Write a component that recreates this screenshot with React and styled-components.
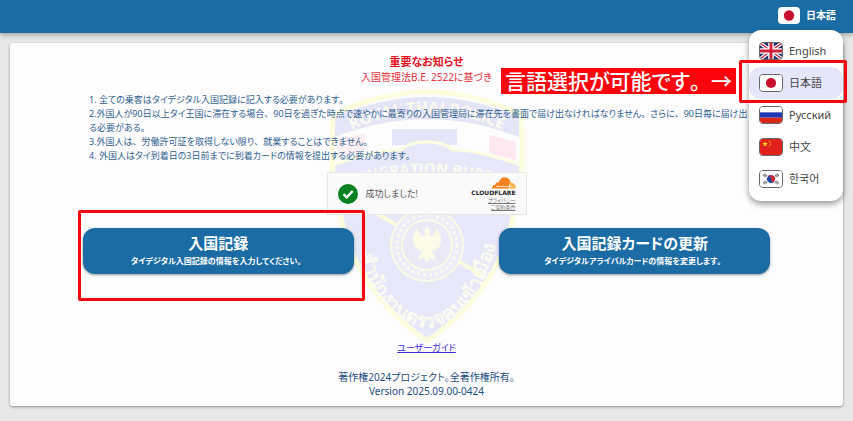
import React from 'react';
import styled, {createGlobalStyle} from 'styled-components';

const languages = [
    {code: 'en', label: 'English'},
    {code: 'ja', label: '日本語'},
    {code: 'ru', label: 'Русский'},
    {code: 'zh', label: '中文'},
    {code: 'ko', label: '한국어'},
]

const notices = [
    '1. 全ての乗客はタイデジタル入国記録に記入する必要があります。',
    '2.外国人が90日以上タイ王国に滞在する場合、90日を過ぎた時点で速やかに最寄りの入国管理局に滞在先を書面で届け出なければなりません。さらに、90日毎に届け出る必要がある。',
    '3.外国人は、労働許可証を取得しない限り、就業することはできません。',
    '4. 外国人はタイ到着日の3日前までに到着カードの情報を提出する必要があります。',
]

const flagArt = {
    en: (
        <>
            <rect width="24" height="18" fill="#1f2f6b"/>
            <path d="M0 0L24 18M24 0L0 18" stroke="#fff" strokeWidth="4"/>
            <path d="M0 0L24 18M24 0L0 18" stroke="#d0213c" strokeWidth="1.4"/>
            <path d="M12 0V18M0 9H24" stroke="#fff" strokeWidth="6"/>
            <path d="M12 0V18M0 9H24" stroke="#d0213c" strokeWidth="3.2"/>
        </>
    ),
    ja: (
        <>
            <rect width="24" height="18" fill="#fff"/>
            <circle cx="12" cy="9" r="5.6" fill="#c8102e"/>
        </>
    ),
    ru: (
        <>
            <rect width="24" height="18" fill="#fff"/>
            <rect y="6" width="24" height="6" fill="#1c38b4"/>
            <rect y="12" width="24" height="6" fill="#d62718"/>
        </>
    ),
    zh: (
        <>
            <rect width="24" height="18" fill="#e0201b"/>
            <path d="M5.5 2.4l.8 2.2h2.3L6.8 6l.7 2.2-2-1.3-2 1.3L4.2 6 2.4 4.6h2.3z" fill="#ffd91a"/>
            <g fill="#f7a81b">
                <circle cx="10" cy="2.5" r=".7"/>
                <circle cx="11.6" cy="4.2" r=".7"/>
                <circle cx="11.6" cy="6.4" r=".7"/>
                <circle cx="10" cy="8" r=".7"/>
            </g>
        </>
    ),
    ko: (
        <>
            <rect width="24" height="18" fill="#fff"/>
            <g transform="rotate(25 12 9)">
                <circle cx="12" cy="9" r="4.4" fill="#18479e"/>
                <path d="M7.6 9a4.4 4.4 0 0 1 8.8 0a2.2 2.2 0 0 1-4.4 0a2.2 2.2 0 0 0-4.4 0z" fill="#cf2638"/>
            </g>
            <g stroke="#333" strokeWidth="0.9">
                <path d="M3.5 5.5l1.8-2.6M4.7 6.3L6.5 3.7M5.9 7.1l1.8-2.6"/>
                <path d="M20.5 12.5l-1.8 2.6M19.3 11.7l-1.8 2.6M18.1 10.9l-1.8 2.6"/>
                <path d="M20.5 5.5l-1.8-2.6M19.3 6.3l-1.8-2.6M18.1 7.1l-1.8-2.6"/>
                <path d="M3.5 12.5l1.8 2.6M4.7 11.7l1.8 2.6M5.9 10.9l1.8 2.6"/>
            </g>
        </>
    ),
}

const Flag = ({code, bordered}) => (
    <FlagFrame viewBox="0 0 24 18" preserveAspectRatio="none" $bordered={bordered} aria-hidden="true">
        {flagArt[code]}
    </FlagFrame>
)

// kana are set proportionally, but 、 and 。 keep their full width
const Japanese = ({children}) => children.split(/([、。])/).map((part, i) => (
    i % 2 ? <FullWidth key={i}>{part}</FullWidth> : part
))

const Emblem = () => (
    <EmblemSvg viewBox="-2 0 220 270" aria-hidden="true">
        <defs>
            <path id="arcTop" d="M22 50Q108 6 194 50"/>
            <path id="arcMiddle" d="M20 104Q108 74 196 104"/>
            <path id="arcBottom" d="M40 164Q56 234 108 243Q160 234 178 154"/>
            <clipPath id="shield">
                <path d="M14 30Q108-16 202 30Q206 96 194 132Q180 205 108 256Q36 205 22 132Q10 96 14 30z"/>
            </clipPath>
        </defs>
        <g clipPath="url(#shield)">
            <path d="M16 32Q108-8 200 32V52Q108 16 16 52z" fill="#e5e5f8"/>
            <rect x="73" y="44" width="65" height="16" fill="#e5e5f8"/>
            <path d="M18 54l28-6v18l-27 6z" fill="#fcf0f4"/>
            <path d="M170 50l27 7v18l-27-7z" fill="#fce8ee"/>
            <path d="M14 80Q60 64 82 65Q90 57 108 57Q126 57 134 65Q156 64 202 80V270H14z" fill="#e7e7fa"/>
            <path d="M14 80Q60 64 82 65Q90 57 108 57Q126 57 134 65Q156 64 202 80" fill="none" stroke="#fdfde0" strokeWidth="3"/>
            <path d="M20 108Q108 84 196 108" fill="none" stroke="#fdfde0" strokeWidth="3"/>
            <path d="M40 118L166 192" stroke="#fbfbdc" strokeWidth="4"/>
        </g>
        <path
            d="M14 30Q108-16 202 30Q206 96 194 132Q180 205 108 256Q36 205 22 132Q10 96 14 30z"
            fill="none"
            stroke="#fcfcdf"
            strokeWidth="5"
            strokeLinejoin="round"
        />
        <circle cx="108" cy="160" r="36" fill="#ececf8" stroke="#fafae6" strokeWidth="2"/>
        <circle cx="108" cy="160" r="30" fill="none" stroke="#fafaf0" strokeWidth="3" strokeDasharray="3 3"/>
        <circle cx="108" cy="160" r="25" fill="#e9e9f8" stroke="#fafae6" strokeWidth="2"/>
        <path
            d="M108 141l3 5-1 5c5 1 6-2 7-8 4 4 7 10 4 17-2 5-6 6-8 6l4 9-6-2-3 5-3-5-6 2 4-9c-2 0-6-1-8-6-3-7 0-13 4-17 1 6 2 9 7 8l-1-5z"
            fill="#fbfbe8"
        />
        <EmblemText fontSize="16">
            <textPath href="#arcTop" startOffset="50%">ROYAL THAI POLICE</textPath>
        </EmblemText>
        <EmblemText fontSize="15">
            <textPath href="#arcMiddle" startOffset="50%">IMMIGRATION BUREAU</textPath>
        </EmblemText>
        <EmblemText fontSize="19">
            <textPath href="#arcBottom" startOffset="50%">สำนักงานตรวจคนเข้าเมือง</textPath>
        </EmblemText>
    </EmblemSvg>
)

const Turnstile = () => (
    <TurnstileBox>
        <CheckIcon viewBox="0 0 20 20" aria-hidden="true">
            <circle cx="10" cy="10" r="10" fill="#0a8023"/>
            <path d="M5.5 10.2l3.2 3.2 6-6.4" fill="none" stroke="#fff" strokeWidth="2.4"/>
        </CheckIcon>
        <TurnstileText>成功しました!</TurnstileText>
        <Brand>
            <CloudIcon viewBox="0 0 24 12" aria-hidden="true">
                <path d="M0 11.5c0-2.4 1.6-3.7 3.4-3.7-.3-2 1.8-3 3.1-2C7.5 2.2 10 .2 12.7.2c3 0 5.3 2.1 5.9 4.8l-2 6.5z" fill="#f48120"/>
                <path d="M17.5 11.5l.8-5.8c3.2-.3 5.7 2.4 5.5 5.8z" fill="#faad3f"/>
                <path d="M4 9.4h12.6l1.6-2.8M17.8 8.9l3 .6" fill="none" stroke="#fff" strokeWidth="0.7"/>
            </CloudIcon>
            <BrandName>CLOUDFLARE</BrandName>
            <BrandLink href="#privacy">プライバシー</BrandLink>
            <BrandLink href="#terms">ご契約条件</BrandLink>
        </Brand>
    </TurnstileBox>
)

const LanguageMenu = () => {
    const [selected, setSelected] = React.useState('ja')

    return (
        <Menu>
            {languages.map(({code, label}) => (
                <MenuItem key={code} lang={code} type="button" $active={code === selected} onClick={() => setSelected(code)}>
                    <Flag code={code} bordered/>
                    {label}
                </MenuItem>
            ))}
            <MenuHighlight/>
        </Menu>
    )
}

const App = () => (
    <>
        <GlobalStyle/>
        <Header>
            <LanguageButton type="button">
                <Flag code="ja"/>
                日本語
            </LanguageButton>
            <LanguageMenu/>
            <Callout><Japanese>言語選択が可能です。→</Japanese></Callout>
        </Header>
        <Card>
            <Emblem/>
            <Title>重要なお知らせ</Title>
            <Subtitle>入国管理法B.E. 2522に基づき</Subtitle>
            <NoticeList>
                {notices.map((notice) => <li key={notice}><Japanese>{notice}</Japanese></li>)}
            </NoticeList>
            <Turnstile/>
            <Actions>
                <ActionCell $marked>
                    <ActionButton type="button">
                        <ActionTitle>入国記録</ActionTitle>
                        <ActionHint><Japanese>タイデジタル入国記録の情報を入力してください。</Japanese></ActionHint>
                    </ActionButton>
                </ActionCell>
                <ActionCell>
                    <ActionButton type="button">
                        <ActionTitle>入国記録カードの更新</ActionTitle>
                        <ActionHint><Japanese>タイデジタルアライバルカードの情報を変更します。</Japanese></ActionHint>
                    </ActionButton>
                </ActionCell>
            </Actions>
            <GuideLink href="#guide">ユーザーガイド</GuideLink>
            <Copyright>
                著作権2024プロジェクト。全著作権所有。<br/>
                Version 2025.09.00-0424
            </Copyright>
        </Card>
    </>
)

export default App

const GlobalStyle = createGlobalStyle`
  * {
    box-sizing: border-box;
  }
  body {
    margin: 0;
    background: #e8e8e8;
    font-family: "Noto Sans", "Noto Sans CJK JP", sans-serif;
    font-feature-settings: "palt";
    font-size: 10px;
    line-height: 14px;
  }
  button {
    font: inherit;
    font-feature-settings: inherit;
    border: 0;
    cursor: pointer;
  }
`
const FullWidth = styled.span`
  font-feature-settings: normal;
`
const Header = styled.header`
  position: relative;
  z-index: 2;
  display: flex;
  justify-content: flex-end;
  align-items: center;
  height: 33px;
  padding: 0 17px;
  background: #1b6ba5;
  box-shadow: 0 2px 5px rgba(0, 0, 0, 0.3);
`
const FlagFrame = styled.svg`
  flex: none;
  width: ${props => props.$bordered ? 24 : 22}px;
  height: ${props => props.$bordered ? 18 : 17}px;
  border: ${props => props.$bordered ? '1px solid #666' : '0'};
  border-radius: 4px;
`
const LanguageButton = styled.button`
  display: flex;
  align-items: center;
  gap: 6px;
  padding: 0;
  margin-bottom: 3px;
  background: none;
  color: white;
  font-weight: 700;
`
const Menu = styled.div`
  position: absolute;
  top: 30px;
  right: 10px;
  width: 94px;
  padding: 5px 0 6px;
  background: white;
  border-radius: 12px;
  box-shadow: 0 3px 6px rgba(0, 0, 0, 0.4);
`
const MenuItem = styled.button`
  display: flex;
  align-items: center;
  gap: 6px;
  width: 100%;
  height: 32px;
  padding: 0 10px;
  background: ${props => props.$active ? '#e6e6fa' : 'none'};
  border-radius: 12px;
  color: #444;
  font-size: 11px;
  white-space: nowrap;
`
const MenuHighlight = styled.div`
  position: absolute;
  top: 30px;
  left: -10px;
  right: -4px;
  height: 43px;
  border: 3px solid #f5060e;
  border-radius: 2px;
  pointer-events: none;
`
const Callout = styled.div`
  position: absolute;
  top: 68px;
  right: 117px;
  padding: 0 4px;
  background: #fb040c;
  color: white;
  font-size: 21px;
  line-height: 26px;
  font-weight: 500;
  white-space: nowrap;
`
const Card = styled.main`
  position: relative;
  z-index: 1;
  display: flex;
  flex-direction: column;
  align-items: center;
  margin: 10px;
  padding: 11px 0 8px;
  background: #fdfdfd;
  border-radius: 3px;
  box-shadow: 0 1px 3px rgba(0, 0, 0, 0.4);
`
const EmblemSvg = styled.svg`
  position: absolute;
  z-index: -1;
  top: 42px;
  left: calc(50% - 110px);
  width: 220px;
  height: 270px;
`
const EmblemText = styled.text`
  fill: #fbfbf0;
  font-family: "Open Sans", "Noto Sans", sans-serif;
  font-weight: 700;
  text-anchor: middle;
`
const Title = styled.h1`
  margin: 0;
  color: #e8101c;
  font-size: 11px;
  line-height: 16px;
  font-weight: 700;
`
const Subtitle = styled.p`
  margin: 0;
  color: #e8303a;
`
const NoticeList = styled.ul`
  align-self: stretch;
  margin: 9px 0;
  padding: 0 88px 0 79px;
  list-style: none;
  color: #2f6090;
  font-size: 9px;
`
const TurnstileBox = styled.div`
  display: flex;
  align-items: center;
  gap: 8px;
  width: 200px;
  height: 43px;
  padding: 0 10px;
  background: #fafafa;
  border: 1px solid #e6e6e6;
`
const CheckIcon = styled.svg`
  width: 20px;
  height: 20px;
`
const TurnstileText = styled.span`
  flex: 1;
  color: #555;
  font-size: 9px;
`
const Brand = styled.div`
  display: flex;
  flex-direction: column;
  align-items: flex-end;
`
const CloudIcon = styled.svg`
  width: 24px;
  height: 12px;
`
const BrandName = styled.span`
  color: #222;
  font-family: "DejaVu Sans", sans-serif;
  font-size: 6px;
  line-height: 8px;
  font-weight: 700;
`
const BrandLink = styled.a`
  color: #777;
  font-size: 5px;
  line-height: 7px;
`
const Actions = styled.div`
  display: grid;
  grid-template-columns: 1fr 1fr;
  align-self: stretch;
  margin-top: 13px;
`
const ActionCell = styled.div`
  position: relative;
  width: 65%;
  justify-self: center;

  &::after {
    content: "";
    display: ${props => props.$marked ? 'block' : 'none'};
    position: absolute;
    inset: -18px -11px -27px -5px;
    border: 3px solid #f5060e;
    border-radius: 2px;
    pointer-events: none;
  }
`
const ActionButton = styled.button`
  display: flex;
  flex-direction: column;
  align-items: center;
  width: 100%;
  padding: 5px 0;
  background: #1b6ba5;
  border-radius: 12px;
  box-shadow: 0 1px 3px rgba(0, 0, 0, 0.4);
  color: white;
  font-weight: 700;
`
const ActionTitle = styled.span`
  font-size: 15px;
  line-height: 20px;
`
const ActionHint = styled.span`
  font-size: 8px;
  line-height: 16px;
`
const GuideLink = styled.a`
  margin-top: 67px;
  color: #3a2be0;
  font-size: 9px;
`
const Copyright = styled.footer`
  margin-top: 15px;
  color: #1c4f80;
  text-align: center;
`
